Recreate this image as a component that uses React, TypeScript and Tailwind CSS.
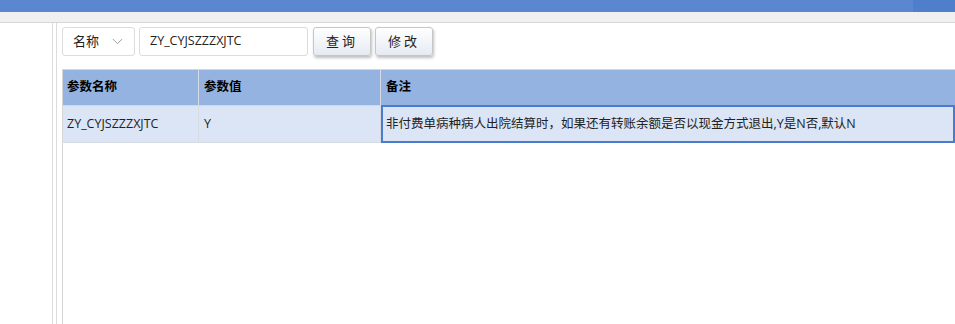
import { ChevronDown } from "lucide-react"

const font = { fontFamily: '"Open Sans", "Noto Sans CJK SC", sans-serif' }

function ToolButton({ label }: { label: string }) {
    return (
        <button className="h-[29px] w-[58px] rounded-[3px] border border-[#c6c6c6] bg-gradient-to-b from-white to-[#e6eaf2] text-[13px] text-[#222] tracking-[3px] shadow-[1px_2px_3px_rgba(0,0,0,0.25)]">
            {label}
        </button>
    )
}

export default function App() {
    const note = "非付费单病种病人出院结算时，如果还有转账余额是否以现金方式退出,Y是N否,默认N"

    return (
        <div style={font} className="w-[955px] h-[324px] overflow-hidden bg-white flex flex-col">
            {/* top bar */}
            <div className="h-[12px] flex">
                <div className="flex-1 bg-[#5a87cf]"></div>
                <div className="w-[42px] bg-[#4f7fcb]"></div>
            </div>
            <div className="h-[11px] bg-[#f0f0f0] border-b border-[#d6d6d6]"></div>

            <div className="flex flex-1">
                <div className="w-[53px] border-r border-[#dcdcdc]"></div>
                <div className="w-[4px] border-r border-[#dcdcdc]"></div>

                <div className="flex-1 pl-[5px] flex flex-col">
                    {/* toolbar */}
                    <div className="flex items-center gap-[4px] pt-[4px] h-[33px]">
                        <div className="h-[29px] w-[73px] flex items-center justify-between pl-[10px] pr-[8px] rounded-[3px] border border-[#dcdcdc] text-[13px] text-[#222]">
                            <span>名称</span>
                            <ChevronDown size={17} strokeWidth={1} className="text-[#777]" />
                        </div>
                        <div className="h-[29px] w-[169px] flex items-center pl-[10px] rounded-[3px] border border-[#dcdcdc] text-[12.5px] text-[#222]">
                            ZY_CYJSZZZXJTC
                        </div>
                        <div className="ml-px flex gap-[4px]">
                            <ToolButton label="查询" />
                            <ToolButton label="修改" />
                        </div>
                    </div>

                    {/* table */}
                    <div className="mt-[13px] flex-1 border-t border-l border-[#d6d6d6] text-[12.5px]">
                        <div className="flex h-[36px] bg-[#95b3e1] border-b border-[#d0d8e6] font-bold text-black">
                            <div className="w-[136px] pl-[4px] flex items-center border-r border-[#d6dbe4]">参数名称</div>
                            <div className="w-[182px] pl-[5px] flex items-center border-r border-[#d6dbe4]">参数值</div>
                            <div className="flex-1 pl-[5px] flex items-center">备注</div>
                        </div>
                        <div className="flex h-[37px] bg-[#dce5f5] border-b border-[#d6dbe4] text-[#222]">
                            <div className="w-[136px] pl-[4px] flex items-center border-r border-[#d6dbe4]">ZY_CYJSZZZXJTC</div>
                            <div className="w-[182px] pl-[5px] flex items-center border-r border-[#d6dbe4]">Y</div>
                            <div className="flex-1 -mt-px -mb-px pl-[3px] flex items-center border-2 border-[#4b7bcd] whitespace-nowrap overflow-hidden">
                                {note}
                            </div>
                        </div>
                    </div>
                </div>
            </div>
        </div>
    )
}
